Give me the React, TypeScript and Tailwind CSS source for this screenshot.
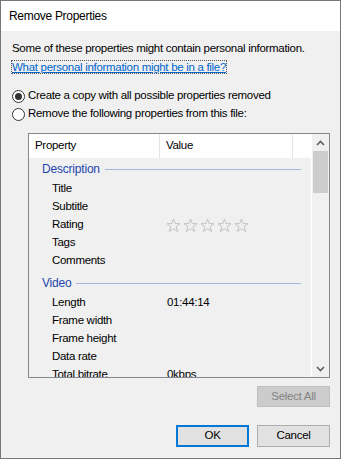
import React from 'react';

const font = { fontFamily: '"Liberation Sans", Arial, sans-serif' };

const Star = () => (
  <svg width="15" height="15" viewBox="0 0 15 15" className="shrink-0">
    <polygon
      points="7.5,1 9.2,5.6 14,5.7 10.2,8.7 11.6,13.5 7.5,10.7 3.4,13.5 4.8,8.7 1,5.7 5.8,5.6"
      fill="none"
      stroke="#c3c3c3"
      strokeWidth="1"
    />
  </svg>
);

const Radio = ({ checked }: { checked?: boolean }) => (
  <span className="w-[13px] h-[13px] rounded-full border border-[#333333] bg-white flex items-center justify-center shrink-0">
    {checked && <span className="w-[7px] h-[7px] rounded-full bg-[#333333]" />}
  </span>
);

const Group = ({ label, first }: { label: string; first?: boolean }) => (
  <div className={`h-[18px] flex items-center pl-[13px] pr-[10px] mb-[2px] ${first ? '' : 'mt-[4px]'}`}>
    <span className="text-[#2347ad] text-[12px] tracking-[-0.2px] leading-none">{label}</span>
    <div className="flex-1 h-px bg-[#a7b7dc] ml-[5px]" />
  </div>
);

const Row = ({ name, value }: { name: string; value?: React.ReactNode }) => (
  <div className="h-[18px] flex items-center text-black whitespace-nowrap">
    <span className="pl-[23px] w-[138px] shrink-0">{name}</span>
    <span>{value}</span>
  </div>
);

const App = () => {
  const groups = [
    {
      label: 'Description',
      rows: [
        { name: 'Title' },
        { name: 'Subtitle' },
        {
          name: 'Rating',
          value: (
            <span className="flex gap-[2px] ml-[-1px]">
              {[0, 1, 2, 3, 4].map((i) => (
                <Star key={i} />
              ))}
            </span>
          ),
        },
        { name: 'Tags' },
        { name: 'Comments' },
      ],
    },
    {
      label: 'Video',
      rows: [
        { name: 'Length', value: '01:44:14' },
        { name: 'Frame width' },
        { name: 'Frame height' },
        { name: 'Data rate' },
        { name: 'Total bitrate', value: '0kbps' },
        { name: 'Frame rate' },
      ],
    },
  ];

  return (
    <div style={font} className="w-[341px] h-[459px] border border-[#777777] flex flex-col bg-[#f0f0f0] text-[11.5px] tracking-[-0.3px] text-black overflow-hidden">
      {/* title bar */}
      <div className="h-[30px] bg-white flex items-center pl-[8px] text-[12px] shrink-0">
        Remove Properties
      </div>

      <div className="flex-1 flex flex-col pl-[11px] pr-[10px] pt-[9px]">
        <div className="leading-[16px] whitespace-nowrap">Some of these properties might contain personal information.</div>
        <div className="mt-[3px] leading-[16px] whitespace-nowrap">
          <span className="text-[#0066cc] underline outline outline-1 outline-dotted outline-[#555555]">
            What personal information might be in a file?
          </span>
        </div>

        <div className="mt-[12px] h-[18px] flex items-center gap-[3px] whitespace-nowrap">
          <Radio checked />
          <span>Create a copy with all possible properties removed</span>
        </div>
        <div className="h-[18px] flex items-center gap-[3px] whitespace-nowrap">
          <Radio />
          <span>Remove the following properties from this file:</span>
        </div>

        {/* list view */}
        <div className="mt-[10px] ml-[16px] h-[245px] border border-[#828790] flex overflow-hidden shrink-0">
          <div className="flex-1 flex flex-col border-r border-white overflow-hidden">
            <div className="h-[24px] bg-white flex shrink-0">
              <div className="w-[131px] border-r border-[#e5e5e5] pl-[6px] flex items-center">Property</div>
              <div className="w-[133px] border-r border-[#e5e5e5] pl-[6px] flex items-center">Value</div>
              <div className="flex-1" />
            </div>
            <div className="pt-[2px]">
              {groups.map((g, gi) => (
                <div key={g.label}>
                  <Group label={g.label} first={gi === 0} />
                  {g.rows.map((r) => (
                    <Row key={r.name} name={r.name} value={r.value} />
                  ))}
                </div>
              ))}
            </div>
          </div>

          {/* scrollbar */}
          <div className="w-[17px] flex flex-col shrink-0">
            <div className="h-[17px] flex items-center justify-center">
              <svg width="9" height="6" viewBox="0 0 9 6">
                <polyline points="1,5 4.5,1.5 8,5" fill="none" stroke="#606060" strokeWidth="1.6" />
              </svg>
            </div>
            <div className="h-[42px] mx-[1px] bg-[#cdcdcd]" />
            <div className="flex-1" />
            <div className="h-[17px] flex items-center justify-center">
              <svg width="9" height="6" viewBox="0 0 9 6">
                <polyline points="1,1 4.5,4.5 8,1" fill="none" stroke="#606060" strokeWidth="1.6" />
              </svg>
            </div>
          </div>
        </div>

        <div className="flex justify-end mt-[8px]">
          <button className="w-[73px] h-[21px] bg-[#cccccc] border border-[#bfbfbf] text-[#838383]">
            Select All
          </button>
        </div>

        <div className="flex justify-end gap-[8px] mt-[18px]">
          <button className="w-[73px] h-[22px] bg-[#e1e1e1] border-2 border-[#0078d7]">OK</button>
          <button className="w-[73px] h-[22px] bg-[#e1e1e1] border border-[#adadad]">Cancel</button>
        </div>
      </div>
    </div>
  );
};

export default App;
